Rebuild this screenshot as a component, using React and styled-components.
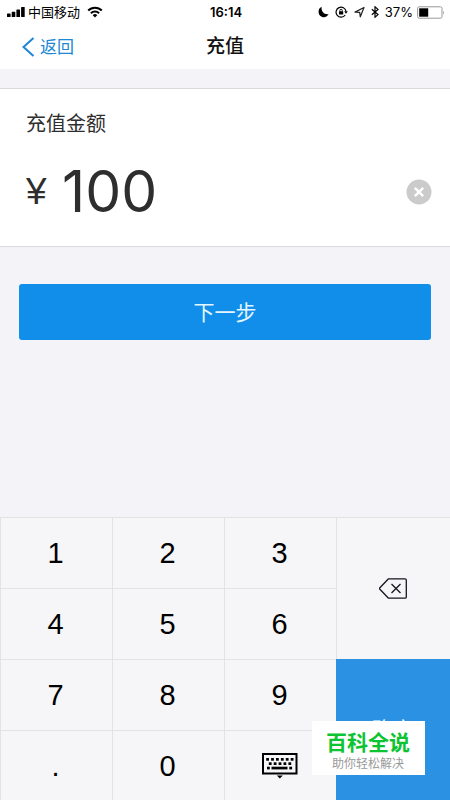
import React, { useState } from 'react';
import styled, { createGlobalStyle } from 'styled-components';

const GlobalStyle = createGlobalStyle`
  *, *::before, *::after { box-sizing: border-box; }
  body {
    margin: 0;
    background: #f3f3f8;
    font-family: Inter, "Noto Sans CJK SC", sans-serif;
    color: #2e2e2e;
  }
  button, input { font: inherit; color: inherit; margin: 0; padding: 0; border: 0; background: none; border-radius: 0; }
  button { cursor: pointer; }
  svg { display: block; flex: none; }
`;

const Page = styled.div`
  position: relative;
  display: flex;
  flex-direction: column;
  min-height: 100vh;
  overflow: hidden;
`;

const StatusBar = styled.div`
  display: grid;
  grid-template-columns: 1fr auto 1fr;
  align-items: center;
  height: 24px;
  padding: 0 5px 0 7px;
  background: #fff;
  color: #000;
  font-size: 13px;
  line-height: 24px;
`;

const StatusGroup = styled.div`
  display: flex;
  align-items: center;
  justify-content: ${(p) => (p.$end ? 'flex-end' : 'flex-start')};
  gap: ${(p) => (p.$end ? 6 : 3)}px;
`;

const Carrier = styled.span`
  margin-right: 4px;
`;

const Clock = styled.time`
  font-weight: 600;
`;

const Power = styled.span`
  display: flex;
  align-items: center;
  gap: 4px;
`;

const NavBar = styled.header`
  display: grid;
  grid-template-columns: 1fr auto 1fr;
  align-items: center;
  height: 45px;
  padding: 0 22px;
  background: #fff;
`;

const BackLink = styled.a`
  display: flex;
  align-items: center;
  justify-self: start;
  gap: 5px;
  color: #2087d4;
  font-size: 17px;
  line-height: 24px;
  text-decoration: none;
`;

const Title = styled.h1`
  margin: 0;
  color: #111;
  font-size: 19px;
  font-weight: 500;
  line-height: 24px;
`;

const AmountCard = styled.section`
  margin-top: 19px;
  padding: 21px 18px 18px 26px;
  border-top: 1px solid #dadadd;
  border-bottom: 1px solid #dadadd;
  background: #fff;
`;

const AmountLabel = styled.label`
  display: block;
  font-size: 20px;
  line-height: 28px;
`;

const AmountRow = styled.div`
  display: flex;
  align-items: center;
  gap: 14px;
  margin-top: 18px;
  height: 72px;
`;

const AmountInput = styled.input`
  flex: 1;
  min-width: 0;
  height: 72px;
  font-size: 57px;
  line-height: 72px;
  outline: none;
`;

const IconButton = styled.button`
  display: flex;
`;

const NextButton = styled.button`
  margin: 37px 19px 24px;
  height: 56px;
  padding-top: 2px;
  border-radius: 3px;
  background: #108ee9;
  color: #e4f6ff;
  font-size: 21px;
  line-height: 54px;
`;

const Keypad = styled.div`
  display: grid;
  grid-template-columns: 112fr 112fr 112fr 114fr;
  grid-template-rows: repeat(3, 71px) 70px;
  margin-top: auto;
  background: #f6f6f8;
`;

const Key = styled.button`
  display: flex;
  align-items: center;
  justify-content: center;
  padding-right: 2px;
  border-top: 1px solid #e3e3e6;
  border-left: 1px solid #e3e3e6;
  color: #000;
  font-family: "Liberation Sans", Arial, sans-serif;
  font-size: 29px;
  line-height: 32px;
`;

const DeleteKey = styled(Key)`
  grid-column: 4;
  grid-row: 1 / span 2;
`;

const ConfirmKey = styled(Key)`
  grid-column: 4;
  grid-row: 3 / span 2;
  padding: 0 0 4px;
  border: 0;
  background: #2b91e3;
  color: #fff;
  font-family: "Noto Sans CJK SC", sans-serif;
  font-size: 21px;
`;

const Watermark = styled.aside`
  position: absolute;
  right: 25px;
  bottom: 25px;
  padding: 9px 15px 4px 14px;
  background: #fff;
  text-align: center;
`;

const WatermarkName = styled.strong`
  display: block;
  color: #0cc432;
  font-size: 21px;
  font-weight: 700;
  line-height: 26px;
`;

const WatermarkNote = styled.span`
  display: block;
  color: #999;
  font-size: 12px;
  line-height: 15px;
`;

const SignalIcon = () => (
  <svg width="18" height="12" viewBox="0 0 18 12" aria-hidden="true">
    <rect x="0" y="7.5" width="3.6" height="3.5" rx=".6" />
    <rect x="4.7" y="5.8" width="3.6" height="5.2" rx=".6" />
    <rect x="9.4" y="3.4" width="3.6" height="7.6" rx=".6" />
    <rect x="14.1" y="1" width="3.6" height="10" rx=".6" />
  </svg>
);

const WifiIcon = () => (
  <svg width="16" height="12" viewBox="0 0 16 12" aria-hidden="true">
    <g fill="none" stroke="#000" strokeWidth="2">
      <path d="M1.2 4.5a9.6 9.6 0 0 1 13.6 0" />
      <path d="M3.9 7.2a5.8 5.8 0 0 1 8.2 0" />
    </g>
    <path d="M8 11.5 5.7 9.2a3.3 3.3 0 0 1 4.6 0z" />
  </svg>
);

const MoonIcon = () => (
  <svg width="11" height="12" viewBox="0 0 11 12" aria-hidden="true">
    <path d="M3.6.8A5.3 5.3 0 0 0 .6 5.8c0 3.2 2.4 5.5 5.3 5.5 2.1 0 3.9-1.2 4.7-3.2-3.6.9-7.6-1.8-7-7.3z" />
  </svg>
);

const RotationLockIcon = () => (
  <svg width="13" height="12" viewBox="0 0 13 12" aria-hidden="true">
    <path d="M10.2 9A5 5 0 1 1 11 5.4" fill="none" stroke="#000" strokeWidth="1.2" />
    <path d="M9.2 5.3h3.6L11 7.8z" />
    <rect x="4" y="5.3" width="4.2" height="3.3" rx=".4" />
    <path d="M4.9 5.5v-1a1.2 1.2 0 0 1 2.4 0v1" fill="none" stroke="#000" strokeWidth=".9" />
  </svg>
);

const LocationIcon = () => (
  <svg width="11" height="12" viewBox="0 0 11 12" aria-hidden="true">
    <path d="M1 6.1 10 1.5 6.3 10.8 5.7 6.4z" fill="none" stroke="#222" strokeWidth="1.2" strokeLinejoin="round" />
  </svg>
);

const BluetoothIcon = () => (
  <svg width="8" height="12" viewBox="0 0 8 12" aria-hidden="true">
    <path d="M.8 3.2 7 8.6 4 11.2V.8L7 3.4.8 8.8" fill="none" stroke="#000" strokeWidth="1.2" />
  </svg>
);

const BatteryIcon = () => (
  <svg width="28" height="13" viewBox="0 0 28 13" aria-hidden="true">
    <rect x=".6" y=".8" width="24.4" height="11.4" rx="1.6" fill="#fff" stroke="#999" strokeWidth="1" />
    <rect x="2.2" y="2.3" width="9" height="8.4" fill="#000" />
    <path d="M26 4.4q1.6 2 0 4z" fill="#999" />
  </svg>
);

const BackIcon = () => (
  <svg width="13" height="20" viewBox="0 0 13 20" aria-hidden="true">
    <path d="M11.5 1 1.5 10l10 9" fill="none" stroke="#1d86d6" strokeWidth="2" />
  </svg>
);

const Yen = styled.span`
  width: 22px;
  font-family: "Liberation Sans", Arial, sans-serif;
  font-size: 37px;
  line-height: 44px;
`;

const ClearIcon = () => (
  <svg width="26" height="26" viewBox="0 0 26 26" aria-hidden="true">
    <circle cx="13" cy="13" r="12.5" fill="#cbcbcb" />
    <path d="m8.8 8.8 8.4 8.4m0-8.4-8.4 8.4" stroke="#fff" strokeWidth="2.4" />
  </svg>
);

const DeleteIcon = () => (
  <svg width="28" height="21" viewBox="0 0 28 21" aria-hidden="true">
    <g fill="none" stroke="#15151f" strokeWidth="1.3">
      <path d="M9.5.8H26q1.3 0 1.3 1.3v16.8q0 1.3-1.3 1.3H9.5L.9 11.3q-.7-.8 0-1.6z" strokeLinejoin="round" />
      <path d="m12.5 6 9 9m0-9-9 9" />
    </g>
  </svg>
);

const dots = (start, y, count) =>
  Array.from({ length: count }, (_, i) => <rect key={`${y}-${i}`} x={start + i * 4.9} y={y} width="2.8" height="2.7" />);

const KeyboardIcon = () => (
  <svg width="36" height="26" viewBox="0 0 36 26" aria-hidden="true">
    <rect x="1" y="1" width="33.5" height="19.5" fill="none" stroke="#000" strokeWidth="2" />
    {dots(4.2, 5, 6)}
    {dots(6.8, 9.3, 5)}
    <rect x="5" y="13.7" width="2.8" height="2.7" />
    <rect x="9.5" y="13.7" width="16" height="2.7" />
    <rect x="27.3" y="13.7" width="2.8" height="2.7" />
    <path d="M14.8 22.5h6L17.8 25.5z" />
  </svg>
);

export default function App() {
  const [amount, setAmount] = useState('100');
  const press = (key) => () => setAmount((value) => value + key);

  return (
    <Page>
      <GlobalStyle />
      <StatusBar>
        <StatusGroup>
          <SignalIcon />
          <Carrier>中国移动</Carrier>
          <WifiIcon />
        </StatusGroup>
        <Clock>16:14</Clock>
        <StatusGroup $end>
          <MoonIcon />
          <RotationLockIcon />
          <LocationIcon />
          <BluetoothIcon />
          <Power>
            37%
            <BatteryIcon />
          </Power>
        </StatusGroup>
      </StatusBar>
      <NavBar>
        <BackLink href="#back">
          <BackIcon />
          返回
        </BackLink>
        <Title>充值</Title>
      </NavBar>
      <AmountCard>
        <AmountLabel htmlFor="amount">充值金额</AmountLabel>
        <AmountRow>
          <Yen>¥</Yen>
          <AmountInput id="amount" inputMode="none" value={amount} onChange={(e) => setAmount(e.target.value)} />
          <IconButton type="button" aria-label="清除" onClick={() => setAmount('')}>
            <ClearIcon />
          </IconButton>
        </AmountRow>
      </AmountCard>
      <NextButton type="button">下一步</NextButton>
      <Keypad>
        {['1', '2', '3', '4', '5', '6', '7', '8', '9', '.', '0'].map((key) => (
          <Key key={key} type="button" onClick={press(key)}>
            {key}
          </Key>
        ))}
        <Key type="button" aria-label="收起键盘">
          <KeyboardIcon />
        </Key>
        <DeleteKey type="button" aria-label="删除" onClick={() => setAmount((value) => value.slice(0, -1))}>
          <DeleteIcon />
        </DeleteKey>
        <ConfirmKey type="button">确定</ConfirmKey>
      </Keypad>
      <Watermark>
        <WatermarkName>百科全说</WatermarkName>
        <WatermarkNote>助你轻松解决</WatermarkNote>
      </Watermark>
    </Page>
  );
}
